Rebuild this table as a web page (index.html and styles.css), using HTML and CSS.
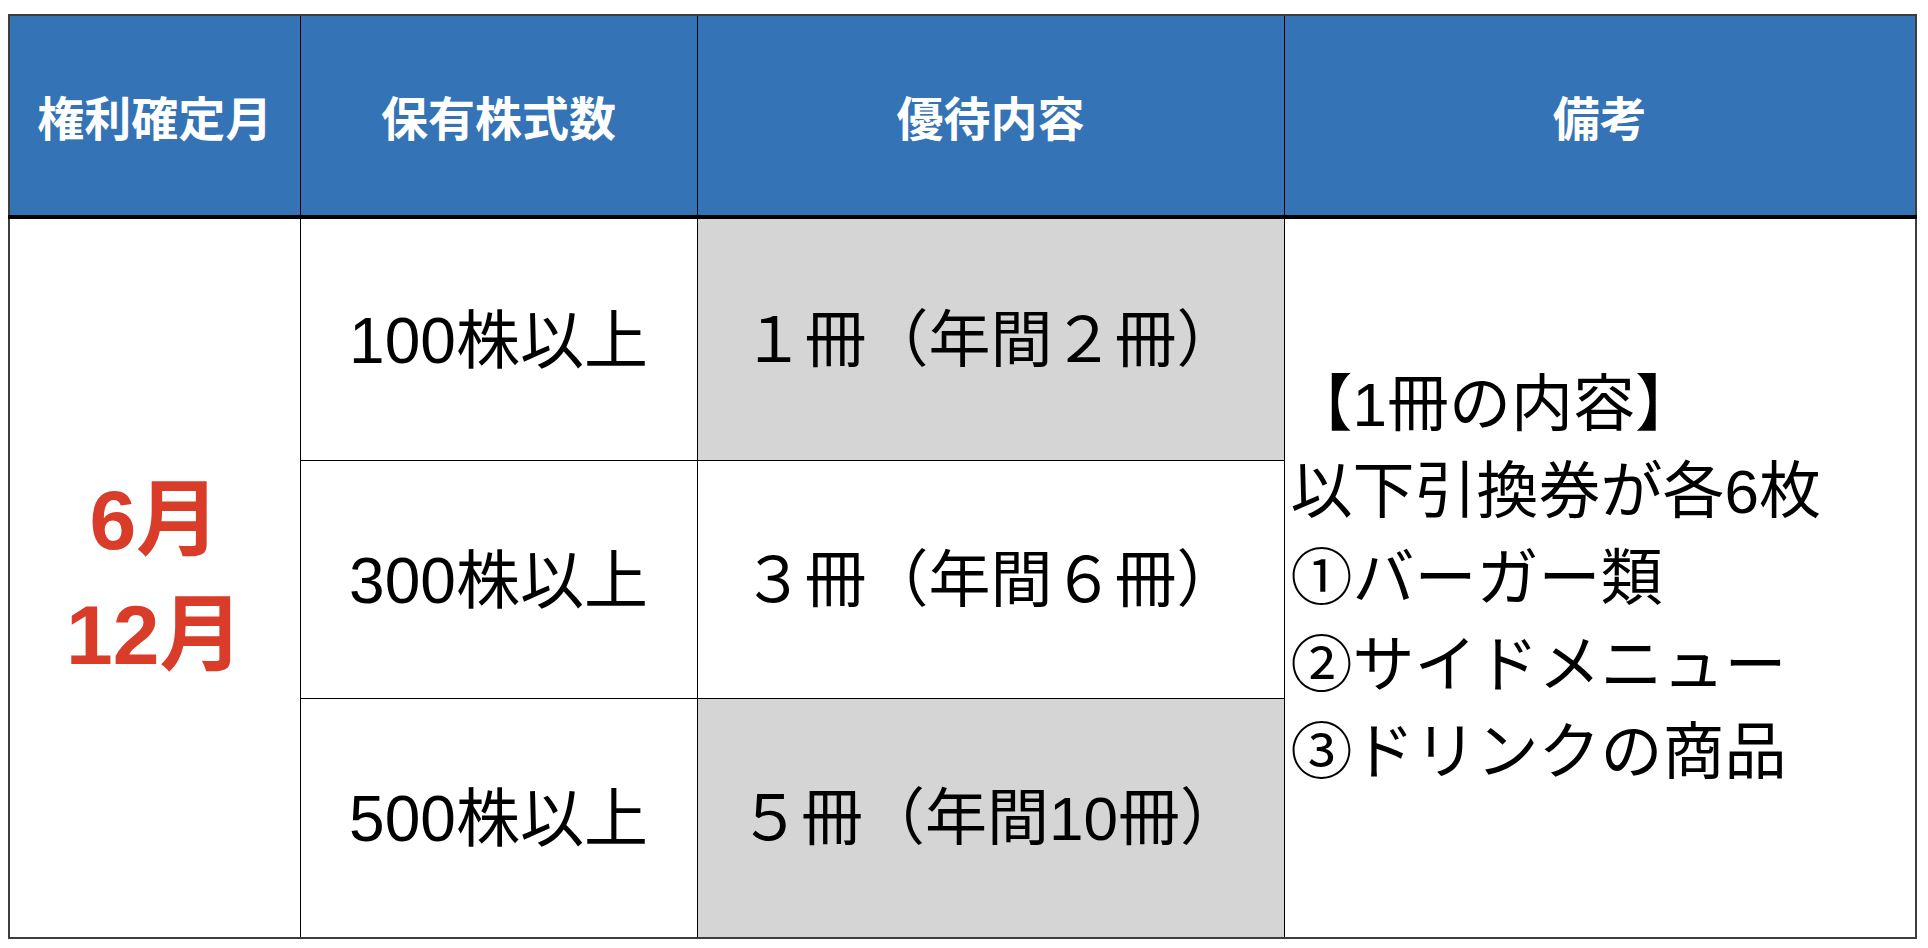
FILE: index.html
```html
<!DOCTYPE html>
<html lang="ja">
<head>
<meta charset="utf-8">
<title>株主優待</title>
<link rel="stylesheet" href="styles.css">
</head>
<body>
<div class="wrap">
<table class="perks">
  <colgroup>
    <col class="c1"><col class="c2"><col class="c3"><col class="c4">
  </colgroup>
  <thead>
    <tr>
      <th>権利確定月</th>
      <th>保有株式数</th>
      <th>優待内容</th>
      <th>備考</th>
    </tr>
  </thead>
  <tbody>
    <tr class="r1">
      <td rowspan="3" class="month">6月<br>12月</td>
      <td>100株以上</td>
      <td class="perk grey">１冊（年間２冊）</td>
      <td rowspan="3" class="note">【1冊の内容】<br>以下引換券が各6枚<br>①バーガー類<br>②サイドメニュー<br>③ドリンクの商品</td>
    </tr>
    <tr class="r2">
      <td>300株以上</td>
      <td class="perk">３冊（年間６冊）</td>
    </tr>
    <tr class="r3">
      <td>500株以上</td>
      <td class="perk grey">５冊（年間10冊）</td>
    </tr>
  </tbody>
</table>
</div>
</body>
</html>
```
FILE: styles.css
```css
html, body {
  margin: 0;
  padding: 0;
  background: #ffffff;
}

.wrap {
  padding: 14px 0 0 8px;
}

.perks {
  width: 1907px;
  table-layout: fixed;
  border-collapse: collapse;
  border: 2px solid #3d3d3d;
  font-family: "Liberation Sans", "Noto Sans CJK JP", sans-serif;
  color: #000;
}

.c1 { width: 291px; }
.c2 { width: 397px; }
.c3 { width: 587px; }
.c4 { width: 632px; }

.perks th,
.perks td {
  border: 1px solid #000;
  padding: 0;
  text-align: center;
  vertical-align: middle;
}

.perks th {
  height: 199px;
  background: #3473b5;
  color: #ffffff;
  font-family: "Noto Sans CJK JP", sans-serif;
  font-weight: 700;
  font-size: 47px;
  border-bottom: 4px solid #000;
}

.perks td {
  font-size: 64px;
  font-weight: 400;
  padding-bottom: 10px;
}

.perks td.perk {
  font-size: 62px;
}

.r1 td { height: 231px; }
.r2 td { height: 227px; }
.r3 td { height: 228px; }

.grey {
  background: #d5d5d5;
}

.perks td.month {
  color: #d93c28;
  font-weight: 700;
  font-size: 84px;
  line-height: 115px;
  padding-bottom: 0;
  font-family: "Liberation Sans", "Noto Sans CJK JP", sans-serif;
}

.perks td.note {
  text-align: left;
  padding-left: 6px;
  padding-bottom: 0;
  font-size: 62px;
  line-height: 87px;
  font-family: "Liberation Sans", "Noto Sans CJK JP", sans-serif;
  white-space: nowrap;
}
```
